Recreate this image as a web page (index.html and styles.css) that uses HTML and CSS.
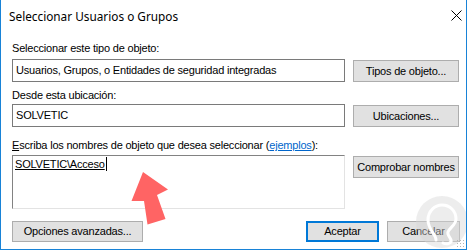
FILE: index.html
```html
<!DOCTYPE html>
<html lang="es">
<head>
  <meta charset="UTF-8">
  <title>Seleccionar Usuarios o Grupos</title>
  <link rel="stylesheet" href="styles.css">
</head>
<body>
<div class="dialog">
  <div class="titlebar">
    <span class="title">Seleccionar Usuarios o Grupos</span>
    <svg class="close" width="11" height="11" viewBox="0 0 11 11">
      <path d="M0.5 0.5 L10.5 10.5 M10.5 0.5 L0.5 10.5" stroke="#000" stroke-width="1" fill="none"/>
    </svg>
  </div>

  <div class="content">
    <div class="label first">Seleccionar este tipo de objeto:</div>
    <div class="row">
      <div class="field">Usuarios, Grupos, o Entidades de seguridad integradas</div>
      <div class="btn">Tipos de objeto...</div>
    </div>

    <div class="label second">Desde esta ubicación:</div>
    <div class="row">
      <div class="field">SOLVETIC</div>
      <div class="btn">Ubicaciones...</div>
    </div>

    <div class="label third"><u>E</u>scriba los nombres de objeto que desea seleccionar (<a class="link">ejemplos</a>):</div>
    <div class="row">
      <div class="names"><span class="resolved">SOLVETIC\Acceso</span><span class="caret"></span></div>
      <div class="btn">Comprobar nombres</div>
    </div>

    <div class="footer">
      <div class="btn small advanced">Opciones avanzadas...</div>
      <div class="btn small ok">Aceptar</div>
      <div class="btn small">Cancelar</div>
    </div>
  </div>

  <!-- flecha roja encima del cuadro de nombres -->
  <svg class="arrow" width="50" height="60" viewBox="125 168 50 60">
    <polygon points="142,172 167,189.5 156,195 164.5,219 146.5,224.5 143,201 130.5,201" fill="#ff6464"/>
  </svg>

  <svg class="watermark" width="56" height="60" viewBox="0 0 56 60">
    <circle cx="28" cy="28" r="26" fill="#d8d8d8" fill-opacity="0.45"/>
    <path d="M22 46 C22 40 14 36 14 26 C14 17 21 11 28 11 C36 11 42 17 42 25 C42 31 36 33 34 38 C33 41 36 43 37 46 C38 49 33 51 29 49" stroke="#fff" stroke-width="3" fill="none" stroke-linecap="round"/>
  </svg>

  <div class="grip"></div>
</div>
</body>
</html>
```

FILE: styles.css
```css
body {
  margin: 0;
  background-color: #fff;
  font-family: "Liberation Sans", Arial, sans-serif;
  font-size: 11px;
  letter-spacing: -0.2px;
  color: #000;
}

.dialog {
  position: relative;
  width: 465px;
  height: 249px;
  border: 1px solid #1883d7;
  border-top: none;
  background-color: #fff;
  overflow: hidden;
}

.titlebar {
  height: 30px;
  display: flex;
  align-items: center;
  justify-content: space-between;
  padding: 0 4px 0 8px;
}

.title {
  font-family: "Noto Sans", "Open Sans", sans-serif;
  font-size: 11.8px;
  letter-spacing: 0;
  line-height: 16px;
  padding-top: 1px;
}

.close {
  display: block;
}

.content {
  padding: 12px 6px 0 11px;
}

.label {
  line-height: 13px;
  height: 13px;
  white-space: nowrap;
}

.label.first {
  margin-bottom: 4px;
}

.label.second {
  margin-top: 7px;
  margin-bottom: 2px;
}

.label.third {
  margin-top: 12px;
  margin-bottom: 3px;
}

.link {
  color: #0066cc;
  text-decoration: underline;
}

.row {
  display: flex;
  gap: 8px;
  align-items: flex-start;
}

.field {
  width: 333px;
  height: 23px;
  box-sizing: border-box;
  border: 1px solid #7a7a7a;
  padding: 0 3px;
  line-height: 21px;
  white-space: nowrap;
}

.names {
  width: 333px;
  height: 54px;
  box-sizing: border-box;
  border: 1px solid #e3e3e3;
  border-top-color: #828282;
  border-left-color: #828282;
  padding: 1px 2px;
  line-height: 13px;
}

.resolved {
  text-decoration: underline;
}

.caret {
  display: inline-block;
  width: 1px;
  height: 14px;
  background-color: #000;
  vertical-align: -3px;
  margin-left: 1px;
}

.btn {
  width: 106px;
  height: 22px;
  margin-top: 1px;
  box-sizing: border-box;
  border: 1px solid #adadad;
  background-color: #e1e1e1;
  text-align: center;
  line-height: 20px;
  white-space: nowrap;
}

.footer {
  display: flex;
  gap: 8px;
  margin-top: 12px;
}

.btn.small {
  width: 73px;
  height: 21px;
  margin-top: 0;
  line-height: 19px;
}

.btn.advanced {
  width: 131px;
  margin-right: auto;
}

.btn.ok {
  border: 2px solid #0078d7;
  line-height: 17px;
}

.arrow {
  position: absolute;
  left: 125px;
  top: 168px;
}

.watermark {
  position: absolute;
  left: 413px;
  top: 194px;
}

.grip {
  position: absolute;
  right: 2px;
  bottom: 2px;
  width: 8px;
  height: 8px;
  background-image: radial-gradient(circle, #b5b5b5 0.8px, transparent 1px);
  background-size: 3px 3px;
}
```
